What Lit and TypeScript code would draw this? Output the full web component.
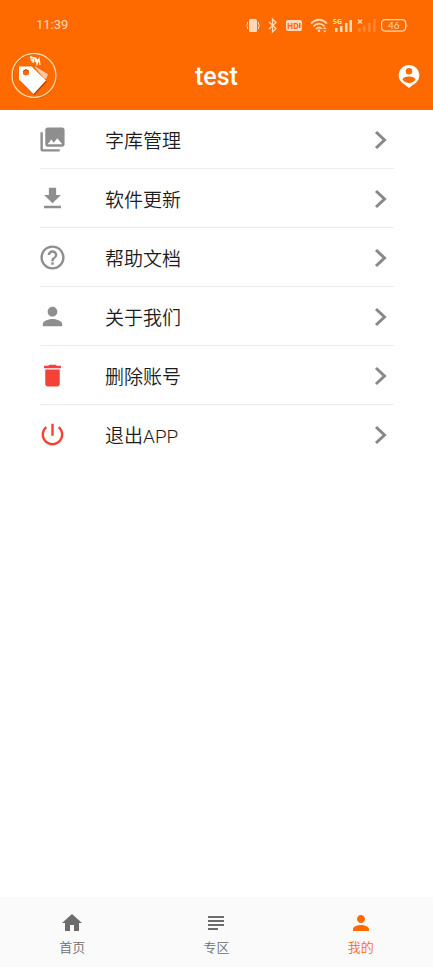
import { LitElement, html, css, svg } from "lit";
import { customElement } from "lit/decorators.js";
import { classMap } from "lit/directives/class-map.js";

const PERSON =
  "M12 12c2.21 0 4-1.79 4-4s-1.79-4-4-4-4 1.79-4 4 1.79 4 4 4zm0 2c-2.67 0-8 1.34-8 4v2h16v-2c0-2.66-5.33-4-8-4z";

const MENU = [
  {
    label: "字库管理",
    path: "M22 16V4c0-1.100-.9-2-2-2H8c-1.100 0-2 .9-2 2v12c0 1.100.9 2 2 2h12c1.100 0 2-.9 2-2zm-11-4l2.030 2.710L16 11l4 5H8l3-4zM2 6v14c0 1.100.9 2 2 2h14v-2H4V6H2z",
    danger: false,
  },
  { label: "软件更新", path: "M19 9h-4V3H9v6H5l7 7 7-7zM5 18v2h14v-2H5z", danger: false },
  {
    label: "帮助文档",
    path: "M11 18h2v-2h-2v2zm1-16C6.480 2 2 6.480 2 12s4.480 10 10 10 10-4.480 10-10S17.520 2 12 2zm0 18c-4.410 0-8-3.590-8-8s3.590-8 8-8 8 3.590 8 8-3.590 8-8 8zm0-14c-2.210 0-4 1.790-4 4h2c0-1.100.9-2 2-2s2 .9 2 2c0 2-3 1.750-3 5h2c0-2.250 3-2.500 3-5 0-2.210-1.790-4-4-4z",
    danger: false,
  },
  { label: "关于我们", path: PERSON, danger: false },
  {
    label: "删除账号",
    path: "M6 19c0 1.100.9 2 2 2h8c1.100 0 2-.9 2-2V7H6v12zM19 4h-3.500l-1-1h-5l-1 1H5v2h14V4z",
    danger: true,
  },
  {
    label: "退出APP",
    path: "M13 3h-2v10h2V3zm4.830 2.170l-1.420 1.420C17.990 7.860 19 9.810 19 12c0 3.870-3.130 7-7 7s-7-3.130-7-7c0-2.190 1.010-4.140 2.580-5.420L6.170 5.170C4.230 6.820 3 9.260 3 12c0 4.970 4.030 9 9 9s9-4.030 9-9c0-2.740-1.230-5.180-3.170-6.830z",
    danger: true,
  },
];

const TABS = [
  { label: "首页", path: "M10 20v-6h4v6h5v-8h3L12 3 2 12h3v8z", active: false },
  {
    label: "专区",
    path: "M14 17H4v2h10v-2zm6-8H4v2h16V9zM4 15h16v-2H4v2zM4 5v2h16V5H4z",
    active: false,
  },
  { label: "我的", path: PERSON, active: true },
];

const bars = (x: number) => svg`
  <rect x=${x} y="10" width="2.600" height="4"/>
  <rect x=${x + 5} y="8" width="2.600" height="6"/>
  <rect x=${x + 10} y="5" width="2.600" height="9"/>
  <rect x=${x + 15} y="1" width="2.600" height="13"/>`;

@customElement("status-bar")
export class StatusBar extends LitElement {
  static styles = css`
    :host {
      display: flex;
      align-items: center;
      justify-content: space-between;
      height: 50px;
      padding: 0 25px 0 36px;
      color: #ffd9b8;
    }
    time {
      font: 13px/20px Roboto, "Noto Sans", sans-serif;
    }
    .icons {
      display: flex;
      align-items: center;
    }
    svg {
      display: block;
      fill: currentColor;
      overflow: visible;
    }
    .stroke {
      fill: none;
      stroke: currentColor;
    }
    .icons svg + svg {
      margin-left: 8px;
    }
    .icons .tight {
      margin-left: 5px;
    }
    .cut {
      fill: #ff6a00;
    }
    .faint {
      opacity: 0.25;
    }
    text {
      font-family: "Noto Sans", sans-serif;
      font-weight: 700;
    }
    .level {
      font-family: Lato, sans-serif;
      font-weight: 400;
    }
  `;

  render() {
    return html`
      <time>11:39</time>
      <div class="icons">
        <svg width="14" height="15" viewBox="0 0 14 15" aria-hidden="true">
          <rect x="3" y="1" width="8" height="13" rx="1.500" />
          <path class="stroke" d="M1.500 4v2l-1 1.500 1 1.500v2M12.500 4v2l1 1.500-1 1.500v2" />
        </svg>
        <svg width="10" height="15" viewBox="0 0 10 15" aria-hidden="true">
          <path class="stroke" stroke-width="1.300" d="M1 4l7 6.500-3.500 3.500V1L8 4.500 1 11" />
        </svg>
        <svg width="16" height="15" viewBox="0 0 16 15">
          <rect y="2" width="16" height="11" rx="2" />
          <text class="cut" x="1" y="11" font-size="8">HD</text>
          <path class="cut" d="M13 5h1.500v5H13z" />
        </svg>
        <svg width="18" height="15" viewBox="0 0 18 15" aria-hidden="true">
          <path class="stroke" stroke-width="1.700" d="M1 5.500Q9-2 17 5.500M3.500 8.300Q9 3 14.500 8.300M6 11Q9 8 12 11" />
          <circle cx="9" cy="12.800" r="1.300" />
          <path d="M13 11l1.800-2 1.800 2zM13 12.500h3.600l-1.800 2z" />
        </svg>
        <svg class="tight" width="19" height="15" viewBox="0 0 19 15">
          <text x="0" y="6" font-size="7">5G</text>
          <rect x="2" y="10" width="2.500" height="4" />
          <rect x="7" y="8" width="2.500" height="6" />
          <rect x="12" y="5" width="2.500" height="9" />
          <rect x="16.500" y="2" width="2.500" height="12" />
        </svg>
        <svg class="tight" width="19" height="15" viewBox="0 0 19 15" aria-hidden="true">
          <path class="stroke" stroke-width="1.200" d="M1 1.500l4 4M5 1.500l-4 4" />
          <g class="faint">${bars(1)}</g>
        </svg>
        <svg class="tight" width="27" height="15" viewBox="0 0 27 15">
          <rect class="stroke" x="0.600" y="1.600" width="24" height="11.500" rx="3.500" stroke-width="1.200" />
          <path d="M25.500 5q1.500 2.500 0 5z" />
          <text class="level" x="7" y="11" font-size="10">46</text>
        </svg>
      </div>
    `;
  }
}

@customElement("app-root")
export class AppRoot extends LitElement {
  static styles = css`
    :host {
      display: flex;
      flex-direction: column;
      min-height: 100vh;
      background: #fff;
      font-family: Roboto, "Noto Sans CJK SC", sans-serif;
    }
    svg {
      display: block;
      flex: none;
      fill: currentColor;
    }
    button {
      border: 0;
      padding: 0;
      background: none;
      color: inherit;
      font: inherit;
      cursor: pointer;
    }
    header {
      background: #ff6a00;
      color: #fff;
    }
    .bar {
      display: grid;
      grid-template-columns: 48px 1fr 48px;
      align-items: center;
      height: 50px;
      padding: 0 10px 10px;
    }
    .account {
      justify-self: end;
      margin-right: 2px;
      padding-top: 2px;
    }
    h1 {
      margin: 0;
      padding-top: 4px;
      text-align: center;
      font-size: 25px;
      line-height: 32px;
      font-weight: 500;
    }
    main {
      flex: 1;
    }
    ul {
      margin: 0;
      padding: 0 39px 0 40px;
      list-style: none;
    }
    li + li {
      border-top: 1px solid #ececec;
    }
    .row {
      display: flex;
      align-items: center;
      width: 100%;
      height: 58px;
      color: #1c1c1c;
      font-size: 19px;
      line-height: 28px;
      text-align: left;
    }
    .icon {
      margin-left: -2px;
      color: #8e8e8e;
    }
    .danger {
      color: #f44336;
    }
    .label {
      flex: 1;
      margin-left: 38px;
      padding-top: 5px;
      font-weight: 350;
    }
    .chevron {
      margin-right: 7px;
      margin-top: 2px;
      fill: none;
      stroke: #888;
      stroke-width: 3;
    }
    nav {
      display: flex;
      height: 70px;
      background: #fafafa;
    }
    .tab {
      flex: 1;
      display: flex;
      flex-direction: column;
      align-items: center;
      padding-top: 14px;
      color: #6c6c6c;
      font-size: 13px;
      line-height: 20px;
    }
    .tab span {
      margin-top: 3px;
      font-weight: 350;
    }
    .tab.active {
      color: #ff6a00;
    }
  `;

  render() {
    return html`
      <header>
        <status-bar></status-bar>
        <div class="bar">
          <svg width="48" height="48" viewBox="0 0 48 48" aria-hidden="true">
            <circle cx="24.500" cy="25" r="22" fill="none" stroke="#a84300" stroke-width="1" />
            <circle cx="24" cy="24.500" r="22" fill="none" stroke="#ffd9a0" stroke-width="1.400" />
            <path fill="#a84300" d="M10 17h12l15 13.500L24.500 44 10 30z" />
            <path fill="#ffc79b" stroke="#c85000" stroke-width=".6" d="M23 14.500l4 1.500 11.500 7-2 5.500-3-1z" />
            <path
              fill="#fff"
              fill-rule="evenodd"
              d="M9 15.500h12.500L36 29.500 23.500 43 9 28.500zM19 21.500a3 2.800 0 1 0-6 0 3 2.800 0 1 0 6 0z"
            />
            <path fill="#ff6a00" d="M13 21.500a3 2.800 0 1 1 6 0 3 2.800 0 1 1-6 0z" />
            <path
              fill="none"
              stroke="#fff"
              stroke-width="1.300"
              d="M20 6l5 1-4 3M20.500 7.500l3 3M24 6l-1 6M25 11l1-4 1 6 2-5 1 6M26 8l4 3"
            />
            <path fill="none" stroke="#a84300" d="M13.500 20q2.500-3 5 0" />
          </svg>
          <h1>test</h1>
          <button class="account" aria-label="账号">
            <svg width="24" height="26" viewBox="0 0 24 26" aria-hidden="true">
              <path
                fill-rule="evenodd"
                d="M12 2a10.300 10.300 0 0 1 4 19.800L12 25l-4-3.200A10.300 10.300 0 0 1 12 2zM12 5a3.300 3.300 0 1 0 0 6.600 3.300 3.300 0 0 0 0-6.600zM12 13.500c-2.500 0-6.500 1-6.500 3a7.800 7.800 0 0 0 13 0c0-2-4-3-6.500-3z"
              />
            </svg>
          </button>
        </div>
      </header>
      <main>
        <ul>
          ${MENU.map(
            (item) => html`<li>
              <button class="row">
                <svg
                  class=${classMap({ icon: true, danger: item.danger })}
                  width="29"
                  height="29"
                  viewBox="0 0 24 24"
                  aria-hidden="true"
                >
                  <path d=${item.path} />
                </svg>
                <span class="label">${item.label}</span>
                <svg class="chevron" width="13" height="20" viewBox="0 0 13 20" aria-hidden="true">
                  <path d="M2 2l8.500 8L2 18" />
                </svg>
              </button>
            </li>`
          )}
        </ul>
      </main>
      <nav>
        ${TABS.map(
          (tab) => html`<button class=${classMap({ tab: true, active: tab.active })}>
            <svg width="24" height="24" viewBox="0 0 24 24" aria-hidden="true">
              <path d=${tab.path} />
            </svg>
            <span>${tab.label}</span>
          </button>`
        )}
      </nav>
    `;
  }
}
